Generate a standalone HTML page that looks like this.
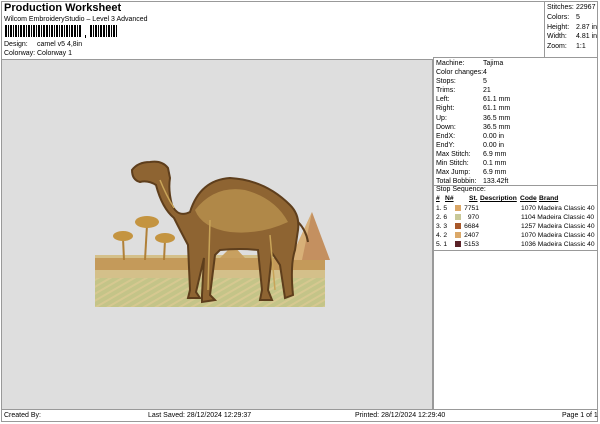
<!DOCTYPE html>
<html><head><meta charset="utf-8"><style>
*{margin:0;padding:0;box-sizing:border-box}
body{width:600px;height:424px;background:#fff;font-family:"Liberation Sans",Arial,sans-serif;font-size:7px;color:#000;position:relative;overflow:hidden}
.a{position:absolute;white-space:nowrap}
.ln{position:absolute;background:#999}
.t{font-size:6.7px}
</style></head><body>
<div class="ln" style="left:1px;top:1px;width:597px;height:1px"></div>
<div class="ln" style="left:1px;top:1px;width:1px;height:421px"></div>
<div class="ln" style="left:597px;top:1px;width:1px;height:421px"></div>
<div class="ln" style="left:1px;top:421px;width:597px;height:1px"></div>
<div class="a" style="left:4px;top:2px;font-size:11px;font-weight:bold">Production Worksheet</div>
<div class="a" style="left:4px;top:16px">Wilcom EmbroideryStudio – Level 3 Advanced</div>
<svg class="a" style="left:5px;top:25px" width="115" height="14">
<g fill="#000">
<rect x="0" y="0" width="2" height="12"/><rect x="3" y="0" width="1" height="12"/><rect x="5" y="0" width="2" height="12"/><rect x="8" y="0" width="1" height="12"/><rect x="10" y="0" width="2" height="12"/><rect x="13" y="0" width="1" height="12"/><rect x="15" y="0" width="2" height="12"/><rect x="18" y="0" width="2" height="12"/><rect x="21" y="0" width="1" height="12"/><rect x="23" y="0" width="2" height="12"/><rect x="26" y="0" width="1" height="12"/><rect x="28" y="0" width="2" height="12"/><rect x="31" y="0" width="1" height="12"/><rect x="33" y="0" width="2" height="12"/><rect x="36" y="0" width="1" height="12"/><rect x="38" y="0" width="2" height="12"/><rect x="41" y="0" width="2" height="12"/><rect x="44" y="0" width="1" height="12"/><rect x="46" y="0" width="2" height="12"/><rect x="49" y="0" width="1" height="12"/><rect x="51" y="0" width="2" height="12"/><rect x="54" y="0" width="1" height="12"/><rect x="56" y="0" width="2" height="12"/><rect x="59" y="0" width="1" height="12"/><rect x="61" y="0" width="2" height="12"/><rect x="64" y="0" width="1" height="12"/><rect x="66" y="0" width="2" height="12"/><rect x="69" y="0" width="2" height="12"/><rect x="72" y="0" width="1" height="12"/><rect x="74" y="0" width="2" height="12"/>
<rect x="80" y="10" width="1" height="3"/>
<rect x="85" y="0" width="2" height="12"/><rect x="88" y="0" width="1" height="12"/><rect x="90" y="0" width="2" height="12"/><rect x="93" y="0" width="1" height="12"/><rect x="95" y="0" width="2" height="12"/><rect x="98" y="0" width="2" height="12"/><rect x="101" y="0" width="1" height="12"/><rect x="103" y="0" width="2" height="12"/><rect x="106" y="0" width="1" height="12"/><rect x="108" y="0" width="2" height="12"/><rect x="111" y="0" width="1" height="12"/>
</g></svg>
<div class="a" style="left:4px;top:41px">Design:</div><div class="a" style="left:37px;top:41px">camel v5 4,8in</div>
<div class="a" style="left:4px;top:50px">Colorway:</div><div class="a" style="left:37px;top:50px">Colorway 1</div>
<div class="ln" style="left:544px;top:1px;width:1px;height:57px"></div>
<div class="ln" style="left:433px;top:57px;width:165px;height:1px"></div>
<div class="a" style="left:547px;top:3px;line-height:9.8px">Stitches:<br>Colors:<br>Height:<br>Width:<br>Zoom:</div>
<div class="a" style="left:576px;top:3px;line-height:9.8px">22967<br>5<br>2.87 in<br>4.81 in<br>1:1</div>
<div class="a" style="left:2px;top:59px;width:431px;height:350px;background:#dedede;border-top:1px solid #999;border-right:1px solid #999"></div>
<svg class="a" style="left:90px;top:150px" width="240" height="160" viewBox="0 0 240 160">
<defs><pattern id="p" width="6" height="6" patternUnits="userSpaceOnUse" patternTransform="rotate(-30)"><rect width="6" height="6" fill="#c4c488"/><rect width="6" height="2" fill="#d6c890"/></pattern></defs>
<rect x="5" y="105" width="230" height="52" fill="#d4c08a"/>
<rect x="5" y="108" width="230" height="12" fill="#c49a5a"/>
<rect x="5" y="128" width="230" height="29" fill="url(#p)"/>
<polygon points="200,110 222,62 240,110" fill="#c49060"/>
<polygon points="200,110 222,62 212,110" fill="#d8b078"/>
<polygon points="130,108 143,95 155,108" fill="#c8a060"/>
<g stroke="#b08038" stroke-width="2" fill="none"><path d="M55 110 L57 75"/><path d="M34 110 L33 88"/><path d="M74 110 L75 90"/></g>
<g fill="#c49440"><ellipse cx="57" cy="72" rx="12" ry="6"/><ellipse cx="33" cy="86" rx="10" ry="5"/><ellipse cx="75" cy="88" rx="10" ry="5"/></g>
<path d="M42,20 Q48,12 60,12 Q72,10 78,18 L80,28 Q78,40 82,55 Q88,68 100,62 Q110,30 140,28 Q175,30 200,55 Q210,65 208,80 L205,100 Q200,115 203,145 L195,148 L190,115 L182,103 L178,140 L182,150 L170,150 L172,140 L168,100 Q150,98 130,100 L125,105 L120,145 L125,150 L112,152 L112,145 L114,108 L106,142 L110,148 L98,148 L100,140 L98,95 Q90,80 84,68 Q72,58 66,35 Q58,30 50,32 Q42,30 42,20 Z" fill="#8e6432" stroke="#5e3e1c" stroke-width="2"/>
<path d="M105,60 Q125,35 155,40 Q185,48 198,72 Q170,85 140,82 Q112,78 105,60Z" fill="#b08848"/>
<path d="M70,30 Q76,45 84,58 M120,70 L118,140 M180,85 L185,140" stroke="#c8a458" stroke-width="1.5" fill="none"/>
<path d="M208,72 Q216,80 218,92" stroke="#5e3e1c" stroke-width="2" fill="none"/>
</svg>
<div class="ln" style="left:433px;top:57px;width:1px;height:352px"></div>
<div class="a" style="left:436px;top:59px;line-height:9.1px">Machine:<br>Color changes:<br>Stops:<br>Trims:<br>Left:<br>Right:<br>Up:<br>Down:<br>EndX:<br>EndY:<br>Max Stitch:<br>Min Stitch:<br>Max Jump:<br>Total Bobbin:</div>
<div class="a" style="left:483px;top:59px;line-height:9.1px">Tajima<br>4<br>5<br>21<br>61.1 mm<br>61.1 mm<br>36.5 mm<br>36.5 mm<br>0.00 in<br>0.00 in<br>6.9 mm<br>0.1 mm<br>6.9 mm<br>133.42ft</div>
<div class="ln" style="left:433px;top:185px;width:165px;height:1px"></div>
<div class="a" style="left:436px;top:186px">Stop Sequence:</div>
<div class="a t" style="left:436px;top:195px;font-weight:bold;text-decoration:underline">#</div>
<div class="a t" style="left:445px;top:195px;font-weight:bold;text-decoration:underline">N#</div>
<div class="a t" style="left:469px;top:195px;font-weight:bold;text-decoration:underline">St.</div>
<div class="a t" style="left:480px;top:195px;font-weight:bold;text-decoration:underline">Description</div>
<div class="a t" style="left:520px;top:195px;font-weight:bold;text-decoration:underline">Code</div>
<div class="a t" style="left:539px;top:195px;font-weight:bold;text-decoration:underline">Brand</div>
<div class="a t" style="left:436px;top:204px;line-height:9px">1. 5<br>2. 6<br>3. 3<br>4. 2<br>5. 1</div>
<div class="a" style="left:455px;top:205px;width:6px;height:6px;background:#dba868"></div>
<div class="a" style="left:455px;top:214px;width:6px;height:6px;background:#c8c898"></div>
<div class="a" style="left:455px;top:223px;width:6px;height:6px;background:#a8582a"></div>
<div class="a" style="left:455px;top:232px;width:6px;height:6px;background:#dba868"></div>
<div class="a" style="left:455px;top:241px;width:6px;height:6px;background:#5a2228"></div>
<div class="a t" style="left:463px;top:204px;line-height:9px;width:16px;text-align:right">7751<br>970<br>6684<br>2407<br>5153</div>
<div class="a t" style="left:521px;top:204px;line-height:9px">1070 Madeira Classic 40<br>1104 Madeira Classic 40<br>1257 Madeira Classic 40<br>1070 Madeira Classic 40<br>1036 Madeira Classic 40</div>
<div class="ln" style="left:433px;top:250px;width:165px;height:1px"></div>
<div class="ln" style="left:1px;top:409px;width:597px;height:1px"></div>
<div class="a" style="left:4px;top:412px">Created By:</div>
<div class="a" style="left:148px;top:412px">Last Saved: 28/12/2024 12:29:37</div>
<div class="a" style="left:355px;top:412px">Printed: 28/12/2024 12:29:40</div>
<div class="a" style="left:562px;top:412px">Page 1 of 1</div>
</body></html>
